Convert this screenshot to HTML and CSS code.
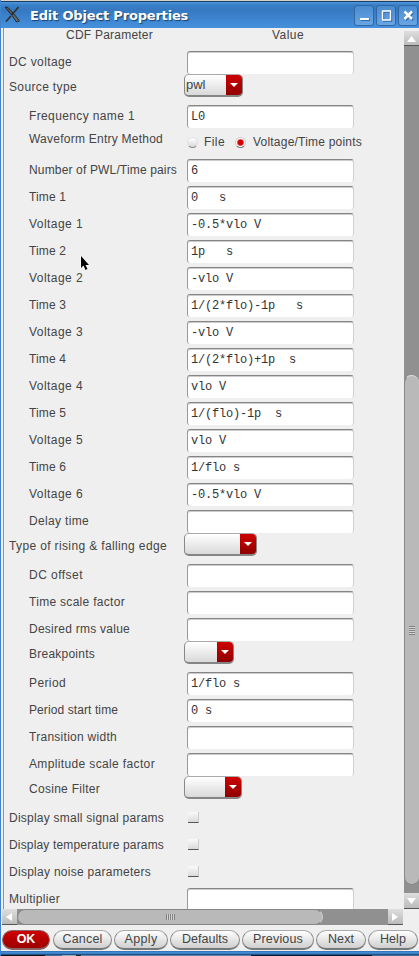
FILE: index.html
```html
<!DOCTYPE html>
<html lang="en">
<head>
<meta charset="utf-8">
<title>Edit Object Properties</title>
<link rel="stylesheet" href="styles.css">
</head>
<body>
<div class="window">
  <header class="titlebar">
    <svg class="logo" width="17" height="18" viewBox="0 0 17 18"><path d="M14.5 1L9 7.5M7 10L2 15.5" stroke="#333" stroke-width="1.8"/><path d="M1 1L4 1.5L9 7L7 8.5Z" fill="#5b5650" stroke="#252a30"/><path d="M7.5 8.5L10 8L15.5 15L12.5 16Z" fill="#6b6964" stroke="#252a30"/></svg>
    <h1>Edit Object Properties</h1>
    <div class="controls">
      <span class="ctl"><svg width="18" height="19"><path d="M5 13H14" stroke="#fff" stroke-width="2"/></svg></span>
      <span class="ctl"><svg width="18" height="19"><path d="M5 5H14M5 14H14M5.5 5V14M13.5 5V14" fill="none" stroke="#fff" stroke-width="1.4"/></svg></span>
      <span class="ctl"><svg width="18" height="19"><path d="M5.5 5.5L13 13M13 5.5L5.5 13" stroke="#fff" stroke-width="2.5"/></svg></span>
    </div>
  </header>
  <div class="middle">
    <main class="form" id="form">
      <div class="heads"><span class="h1">CDF Parameter</span><span class="h2">Value</span></div>
    </main>
    <div class="vbar">
      <span class="sbtn"><svg width="15" height="15"><path d="M7.5 5L12 11H3Z" fill="#fff"/></svg></span>
      <div class="vtrack"><div class="vthumb"><i></i></div></div>
      <span class="sbtn down"><svg width="15" height="16"><path d="M3 5H12L7.5 11Z" fill="#fff"/></svg></span>
    </div>
  </div>
  <div class="hbar">
    <span class="sbtn"><svg width="15" height="15"><path d="M4 8L10 4V12Z" fill="#fff"/></svg></span>
    <div class="htrack"><div class="hthumb"><i></i></div></div>
    <span class="sbtn"><svg width="15" height="15"><path d="M10 8L4 4V12Z" fill="#fff"/></svg></span>
  </div>
  <footer class="buttons">
    <button class="ok">OK</button><button class="cancel">Cancel</button><button class="apply">Apply</button><button class="defaults">Defaults</button><button class="previous">Previous</button><button class="next">Next</button><button class="help">Help</button>
  </footer>
  <div class="edge"></div>
  <div class="behind"></div>
  <svg class="cursor" width="12" height="18" viewBox="0 0 12 18"><path d="M2 1V13L4.5 10.5L6.5 15L8.5 14L6.5 10H10Z" fill="#000" stroke="#fff" stroke-width="1" paint-order="stroke"/></svg>
</div>
<script src="form.js"></script>
</body>
</html>
```
FILE: styles.css
```css
* { box-sizing: border-box; }
body { margin: 0; background: #efefef; font: 12px "Liberation Sans", Arial, sans-serif; color: #444; overflow: hidden; }
svg { display: block; }
.window { position: relative; width: 419px; height: 956px; display: flex; flex-direction: column; border-left: 1px solid #3f84cc; overflow: hidden; }
.titlebar { height: 28px; flex: none; margin-left: -1px; padding: 3px 1px 0 4px; display: flex; border-top: 1px solid #d5d1c6; background: linear-gradient(#173e66 0, #173e66 1px, #4f97df 1px, #387fc9 4px, #3679c1 9px, #4590dd 100%); }
.logo { margin: 2px 0 0 0; }
.titlebar h1 { margin: 3px 0 0 9px; font: bold 13px/18px "DejaVu Sans", sans-serif; letter-spacing: -.18px; color: #fff; text-shadow: 1px 1px 1px #173f6b; white-space: nowrap; }
.controls { display: flex; gap: 2px; margin: 1px 0 0 auto; }
.ctl { width: 20px; height: 21px; border: 1px solid #3166a2; border-radius: 3px; background: linear-gradient(#498bcf, #69a5e3); }
.ctl svg { filter: drop-shadow(1px 1px 0 #316aa8); }
.middle { display: flex; height: 881px; flex: none; }
.form { width: 401px; margin-left: 2px; border-left: 1px solid #929292; overflow: hidden; }
.heads { height: 20px; display: flex; line-height: 14px; }
.h1 { margin-left: 62px; width: 206px; }
.row { display: grid; grid-template-columns: 183px 1fr; height: 27px; }
.label { padding: 6px 0 0 5px; line-height: 16px; white-space: nowrap; }
.in .label { padding-left: 25px; }
.up .label { padding-top: 4px; }
.wave .label { padding-top: 2px; }
.field { width: 167px; height: 23px; margin-top: 3px; padding: 0 0 0 3px; border: 1px solid #d0d0d0; border-top: 1px solid #858585; border-left-color: #999; border-bottom: 0; border-radius: 3px; background: #fff; box-shadow: inset 0 1px #ccc; font: 12px/22px "Liberation Mono", monospace; letter-spacing: -.2px; white-space: pre; color: #333; }
.combo { height: 23px; margin: -1px 0 0 -3px; display: flex; border: 1px solid #aaa; border-bottom: 2px solid #858585; border-left-color: #888; border-right-color: #888; border-radius: 5px; background: linear-gradient(#fff, #d9d9d9); line-height: 20px; padding-left: 1px; overflow: hidden; font-size: 13px; }
.combo svg { margin-left: auto; background: linear-gradient(#cf0000, #8f0000); flex: none; }
.radios { display: flex; align-items: center; height: 26px; line-height: 26px; white-space: nowrap; }
.dot { width: 11px; height: 11px; margin: 0 6px 0 0; border-radius: 50%; background: linear-gradient(#fff, #d8d8d8); border: 1px solid #e2e2e2; border-bottom: 1px solid #888; }
.dot.on { margin-left: 10px; background: radial-gradient(circle, #d40000 0 2.5px, #fff 4px); border-color: #ccc; border-bottom-color: #777; margin-right: 7px; }
.check { width: 11px; height: 11px; margin: 8px 0 0 1px; background: linear-gradient(#fafafa, #dadada); border-bottom: 1px solid #555; border-right: 1px solid #ccc; }
.vbar { width: 15px; display: flex; flex-direction: column; padding-top: 3px; }
.sbtn { flex: none; width: 15px; height: 15px; background: linear-gradient(#dedede, #bbb); border-bottom: 1px solid #555; }
.down { height: 16px; }
.vtrack { height: 847px; background: #909090; padding-top: 329px; }
.vthumb { height: 510px; background: #b9b9b9; border: 1px solid #888; border-top-color: #ddd; border-right: 0; border-radius: 8px; display: flex; align-items: center; justify-content: center; }
.vthumb i { width: 6px; height: 9px; background: repeating-linear-gradient(#808080 0 1px, #d4d4d4 1px 2px); }
.hbar { display: flex; height: 16px; flex: none; padding-left: 1px; }
.hbar .sbtn { height: 16px; }
.htrack { width: 371px; background: #909090; }
.hthumb { width: 306px; height: 16px; background: #b9b9b9; border: 1px solid #858585; border-right-color: #ccc; border-radius: 8px; display: flex; align-items: center; justify-content: center; }
.hthumb i { width: 9px; height: 6px; background: repeating-linear-gradient(90deg, #808080 0 1px, #d4d4d4 1px 2px); }
.buttons { height: 26px; flex: none; display: flex; gap: 2px; padding: 5px 0 0 1px; }
.buttons button { height: 20px; padding: 0; border: 1px solid #888; border-top-color: #aaa; border-bottom: 2px solid #777; border-radius: 10px; background: linear-gradient(#fff, #cfcfcf); font: 12.5px/17px "Liberation Sans", Arial, sans-serif; color: #444; }
.buttons .ok { width: 48px; background: linear-gradient(#cf0000, #9d0000); color: #fff; font-weight: bold; border-color: #866; }
.buttons .cancel { width: 59px; margin-left: 1px; }
.buttons .apply { width: 54px; }
.buttons .defaults { width: 70px; }
.buttons .previous { width: 72px; }
.buttons .next { width: 50px; }
.buttons .help { width: 50px; }
.edge { height: 4px; flex: none; margin-left: -1px; background: linear-gradient(#2c6db2, #4a94df 50%, #123c6b); }
.behind { height: 1px; margin-left: -1px; background: linear-gradient(90deg, #111 0 45px, #3f6a99 45px 62px, #9ab 62px 76px, #222 76px 81px, #6583a5 81px 251px, #07182c 251px 372px, #426b98 372px); }
.cursor { position: absolute; left: 78px; top: 255px; }
```
FILE: form.js
```javascript
// Each row: kind, label, indented, value or combo width, label width in pixels
const rows = [
  ['field', 'DC voltage', 0, '', 63],
  ['combo', 'Source type', 0, 59, 68, 'pwl'],
  ['field', 'Frequency name 1', 1, 'L0', 106],
  ['wave', 'Waveform Entry Method', 1, '', 134],
  ['field', 'Number of PWL/Time pairs', 1, '6', 148],
  ['field', 'Time 1', 1, '0   s', 37],
  ['field', 'Voltage 1', 1, '-0.5*vlo V', 54],
  ['field', 'Time 2', 1, '1p   s', 37],
  ['field', 'Voltage 2', 1, '-vlo V', 54],
  ['field', 'Time 3', 1, '1/(2*flo)-1p   s', 37],
  ['field', 'Voltage 3', 1, '-vlo V', 54],
  ['field', 'Time 4', 1, '1/(2*flo)+1p  s', 37],
  ['field', 'Voltage 4', 1, 'vlo V', 54],
  ['field', 'Time 5', 1, '1/(flo)-1p  s', 37],
  ['field', 'Voltage 5', 1, 'vlo V', 54],
  ['field', 'Time 6', 1, '1/flo s', 37],
  ['field', 'Voltage 6', 1, '-0.5*vlo V', 54],
  ['field', 'Delay time', 1, '', 60],
  ['combo', 'Type of rising & falling edge', 0, 73, 158, ''],
  ['field', 'DC offset', 1, '', 54],
  ['field', 'Time scale factor', 1, '', 96],
  ['field', 'Desired rms value', 1, '', 101],
  ['combo', 'Breakpoints', 1, 50, 66, ''],
  ['field', 'Period', 1, '1/flo s', 37],
  ['field', 'Period start time', 1, '0 s', 89],
  ['field', 'Transition width', 1, '', 88],
  ['field', 'Amplitude scale factor', 1, '', 126],
  ['combo', 'Cosine Filter', 1, 58, 71, ''],
  ['check', 'Display small signal params', 0, '', 155],
  ['check', 'Display temperature params', 0, '', 155],
  ['check', 'Display noise parameters', 0, '', 142],
  ['field', 'Multiplier', 0, '', 51],
];

function add(parent, className, text) {
  const el = document.createElement('span');
  el.className = className;
  el.textContent = text || '';
  parent.append(el);
  return el;
}

// Spread the letters so that the text takes the given width
function fit(el, width) {
  const range = document.createRange();
  range.selectNodeContents(el);
  const natural = range.getBoundingClientRect().width;
  el.style.letterSpacing = (width - natural) / el.textContent.length + 'px';
}

const form = document.getElementById('form');
for (const [kind, label, indent, value, width, text] of rows) {
  const row = document.createElement('div');
  row.className = 'row' + (indent ? ' in' : '') + (kind === 'combo' ? ' up' : '') + (kind === 'wave' ? ' wave' : '');
  form.append(row);
  fit(add(row, 'label', label), width);
  if (kind === 'field') add(row, 'field', value);
  if (kind === 'check') add(row, 'check');
  if (kind === 'combo') {
    const combo = add(row, 'combo', text);
    combo.style.width = value + 'px';
    combo.insertAdjacentHTML('beforeend', '<svg width="16" height="20"><path d="M4 8H12L8 12Z" fill="#fff"/></svg>');
  }
  if (kind === 'wave') {
    const radios = add(row, 'radios');
    add(radios, 'dot');
    fit(add(radios, 'opt', 'File'), 21);
    add(radios, 'dot on');
    fit(add(radios, 'opt', 'Voltage/Time points'), 109);
  }
}
fit(document.querySelector('.h1'), 87);
fit(document.querySelector('.h2'), 32);
for (const [name, width] of [['cancel', 40], ['apply', 33], ['defaults', 46], ['previous', 50], ['next', 26], ['help', 26]]) {
  fit(document.querySelector('.buttons .' + name), width);
}
```
